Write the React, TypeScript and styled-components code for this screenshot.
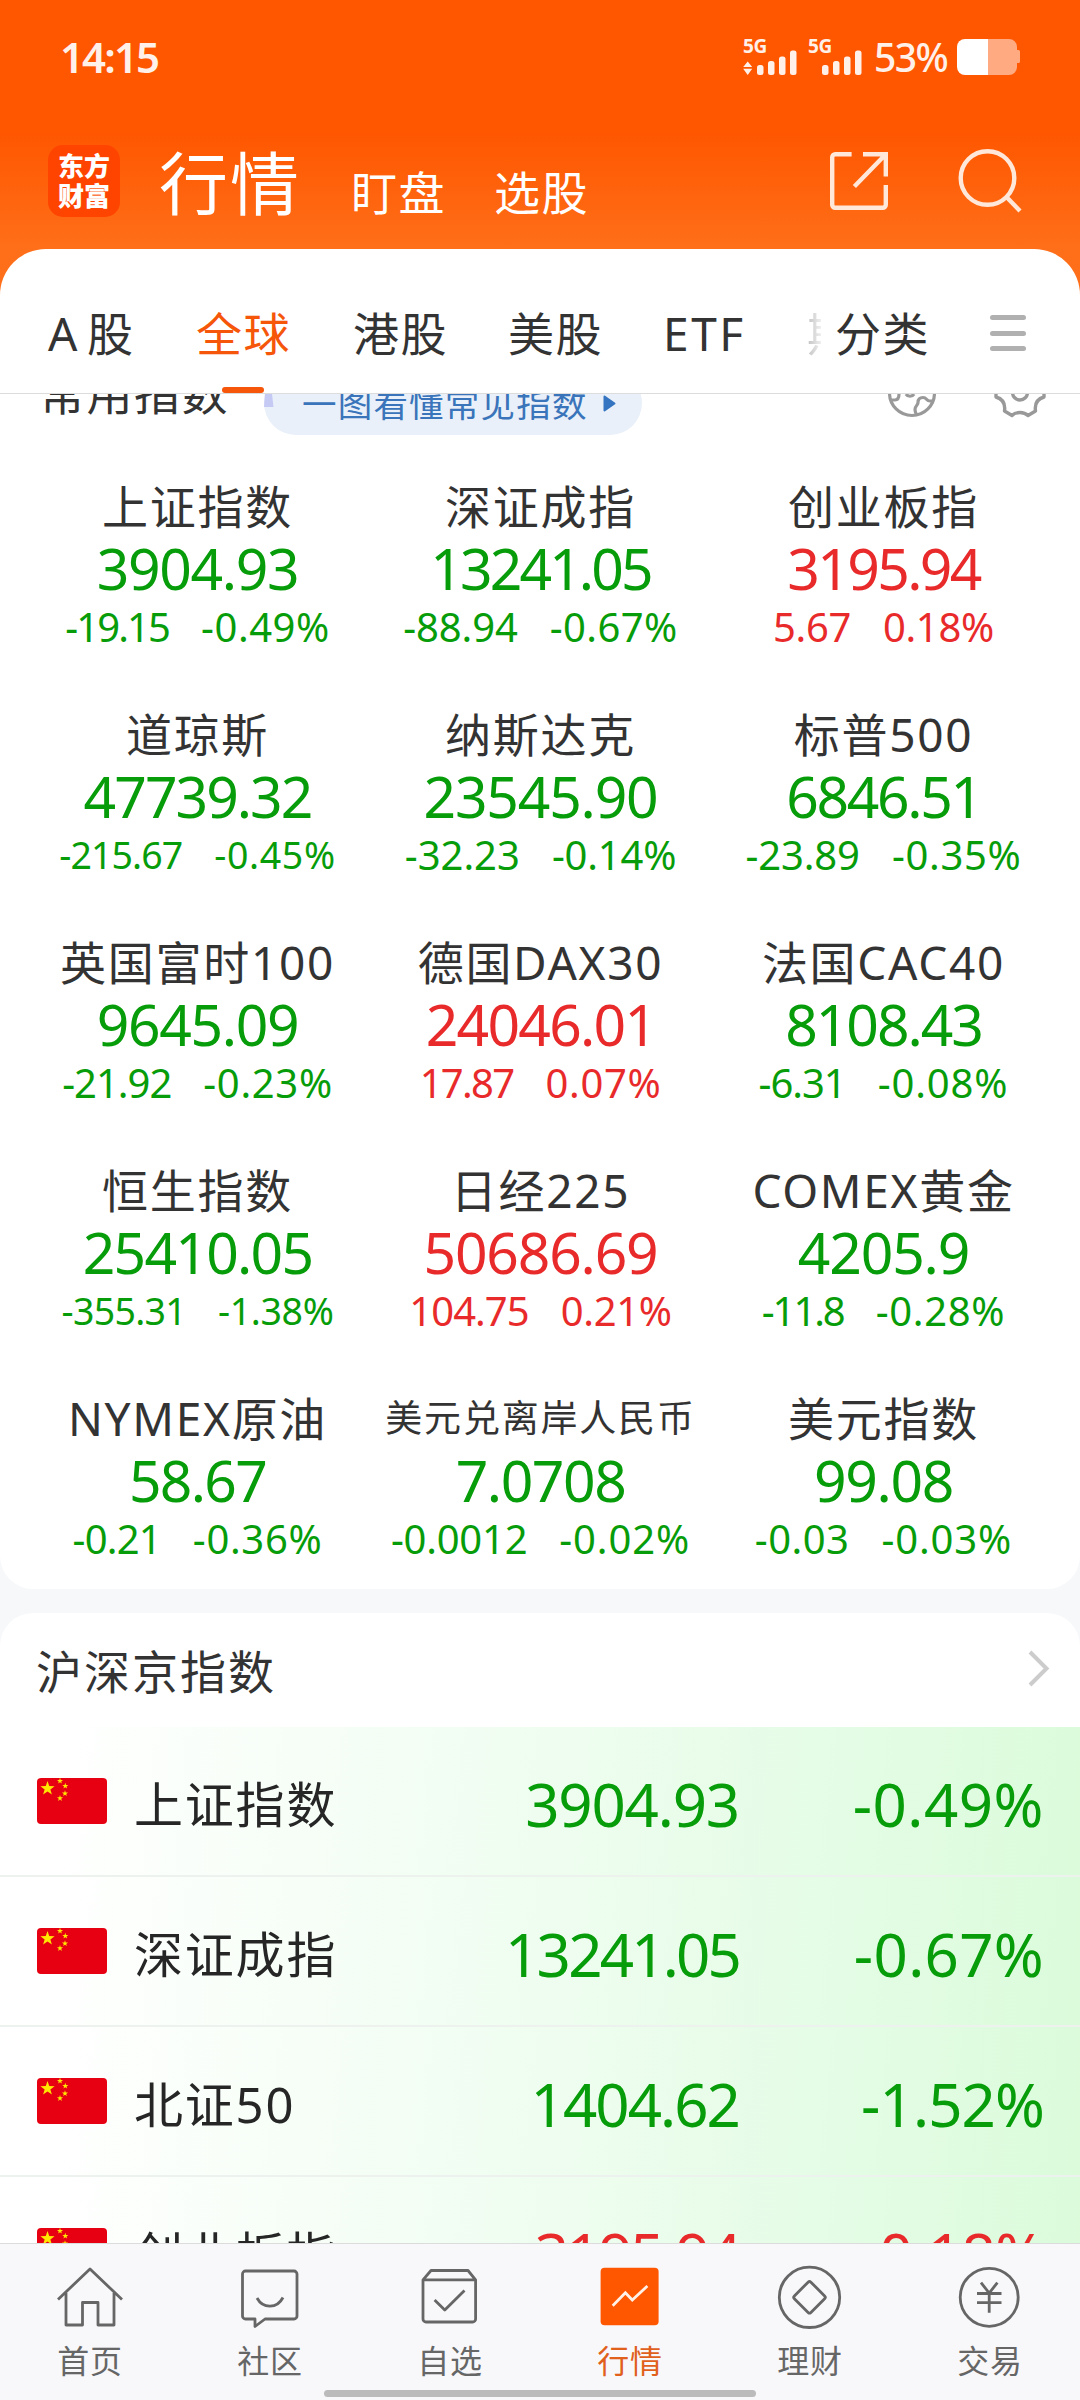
import React from 'react';
import styled, { createGlobalStyle, css } from 'styled-components';

const GREEN = '#079c09';
const RED = '#e92a2b';
const INK = '#333333';

const GlobalStyle = createGlobalStyle`
  * { box-sizing: border-box; }
  html, body { margin: 0; padding: 0; }
  body {
    width: 1080px;
    height: 2400px;
    overflow: hidden;
    font-family: "Noto Sans", "Noto Sans CJK SC", sans-serif;
    color: ${INK};
  }
`;

const Screen = styled.div`
  width: 1080px;
  height: 2400px;
  display: flex;
  flex-direction: column;
  overflow: hidden;
  background: linear-gradient(180deg, #ff5600 0, #ff5600 130px, #ff6e18 246px, #ff6e18 100%);
`;

/* ---------- status bar ---------- */

const StatusBar = styled.div`
  flex: none;
  height: 114px;
  padding: 0 60px 0 60px;
  display: flex;
  align-items: center;
  justify-content: space-between;
  color: #fff1ea;
`;

const Clock = styled.div`
  font-size: 42px;
  font-weight: 600;
  line-height: 60px;
  letter-spacing: -1.9px;
`;

const StatusRight = styled.div`
  display: flex;
  align-items: center;
`;

const Signal = styled.div<{ $gap: number }>`
  width: 54px;
  height: 36px;
  margin-right: ${(p) => p.$gap}px;
  display: grid;
  > * { grid-area: 1 / 1; }
`;

const SignalLabel = styled.span`
  font-size: 19px;
  line-height: 14px;
  font-weight: 700;
  letter-spacing: -0.3px;
`;

const Percent = styled.span`
  width: 83px;
  font-size: 39px;
  font-weight: 500;
  line-height: 36px;
  letter-spacing: -1.6px;
`;

/* ---------- app header ---------- */

const Header = styled.header`
  flex: none;
  height: 135px;
  padding: 31px 58px 0 48px;
  display: flex;
  align-items: flex-start;
`;

const Logo = styled.div`
  width: 72px;
  height: 72px;
  border-radius: 15px;
  background: #ff4400;
  color: #fff;
  padding-top: 5px;
  font-family: "Noto Sans CJK SC", sans-serif;
  font-size: 26px;
  line-height: 30px;
  font-weight: 900;
  text-align: center;
`;

const Modes = styled.nav`
  flex: 1;
  height: 72px;
  margin-left: 39px;
  display: flex;
  align-items: baseline;
  color: #fff;
  font-family: "Noto Sans CJK SC", sans-serif;
`;

const Mode = styled.span<{ $active?: boolean }>`
  font-size: ${(p) => (p.$active ? 69 : 46)}px;
  line-height: 71px;
  letter-spacing: ${(p) => (p.$active ? 2 : 1.5)}px;
  margin-right: ${(p) => (p.$active ? 50 : 48)}px;
  font-weight: 400;
`;

const HeaderIcons = styled.div`
  display: flex;
  gap: 70px;
  padding-top: 4px;
`;

/* ---------- market tabs ---------- */

const Sheet = styled.main`
  flex: 1;
  min-height: 0;
  display: flex;
  flex-direction: column;
  border-radius: 46px 46px 0 0;
  overflow: hidden;
  background: #fff;
`;

const TabBar = styled.div`
  flex: none;
  height: 145px;
  border-bottom: 1px solid #dcdcdc;
  padding: 0 54px 0 48px;
  display: flex;
  align-items: stretch;
  font-size: 46px;
`;

const Tab = styled.div<{ $width: number; $active?: boolean; $track?: number }>`
  flex: none;
  width: ${(p) => p.$width}px;
  line-height: 169px;
  letter-spacing: ${(p) => p.$track ?? 1.6}px;
  white-space: nowrap;
  color: ${(p) => (p.$active ? '#f5560a' : INK)};
  position: relative;
  ${(p) =>
    p.$active &&
    css`
      &::after {
        content: '';
        position: absolute;
        left: 26px;
        bottom: 0;
        width: 42px;
        height: 6px;
        border-radius: 3px;
        background: #f5560a;
      }
    `}
`;

const FadedTab = styled(Tab)`
  width: 14px;
  margin-right: 14px;
  overflow: hidden;
  -webkit-mask-image: linear-gradient(90deg, rgba(0, 0, 0, 0.3), rgba(0, 0, 0, 0.08));
  mask-image: linear-gradient(90deg, rgba(0, 0, 0, 0.3), rgba(0, 0, 0, 0.08));
`;

const MenuLines = styled.div`
  width: 36px;
  height: 36px;
  margin: 66px 0 0 auto;
  display: flex;
  flex-direction: column;
  justify-content: space-between;
`;

const MenuLine = styled.i`
  height: 5px;
  border-radius: 3px;
  background: #b0b0b0;
`;

/* ---------- scroll area ---------- */

const Scroll = styled.div`
  flex: 1;
  min-height: 0;
  overflow: hidden;
  background: #f7f8fa;
`;

const Panel = styled.section<{ $first?: boolean }>`
  background: #fff;
  overflow: hidden;
  ${(p) =>
    p.$first
      ? css`
          height: 1235px;
          margin: -40px 0 24px;
          border-radius: 0 0 33px 33px;
        `
      : css`
          border-radius: 33px 33px 0 0;
        `}
`;

const CommonHead = styled.div`
  height: 117px;
  padding: 0 34px 0 39px;
  display: flex;
  align-items: flex-start;
`;

const CommonTitle = styled.h2`
  margin: 0;
  width: 225px;
  font-size: 46px;
  font-weight: 400;
  line-height: 76px;
  letter-spacing: 1.5px;
  white-space: nowrap;
`;

const GuidePill = styled.div`
  width: 378px;
  height: 64px;
  margin-top: 17px;
  border-radius: 32px;
  background: #e9f0f9;
  color: #3a74ba;
  display: flex;
  align-items: center;
  font-size: 34.5px;
  letter-spacing: 1.2px;
  white-space: nowrap;
`;

const GuideText = styled.span`
  margin: -2px 15px 0 28px;
`;

const HeadIcons = styled.div`
  margin: 14px 0 0 auto;
  display: flex;
  gap: 57px;
`;

const Grid = styled.div`
  display: grid;
  grid-template-columns: repeat(3, 343px);
  grid-auto-rows: 228px;
  justify-content: center;
`;

const Cell = styled.div<{ $color: string }>`
  display: flex;
  flex-direction: column;
  align-items: center;
  color: ${(p) => p.$color};
  white-space: nowrap;
  padding: 5px 0 0 1px;
`;

const CellName = styled.div<{ $small?: boolean }>`
  color: ${INK};
  font-size: ${(p) => (p.$small ? 37 : 46)}px;
  letter-spacing: ${(p) => (p.$small ? 1.8 : 1.7)}px;
  line-height: 60px;
`;

const CellPrice = styled.div<{ $track: number }>`
  font-size: 57px;
  line-height: 64px;
  letter-spacing: ${(p) => p.$track}em;
`;

const CellDelta = styled.div<{ $long: boolean }>`
  display: flex;
  gap: 32px;
  font-size: ${(p) => (p.$long ? 37.5 : 40)}px;
  line-height: 54px;
`;

const Delta = styled.span<{ $track: number }>`
  letter-spacing: ${(p) => p.$track}em;
`;

/* ---------- index list ---------- */

const ListHead = styled.div`
  height: 114px;
  padding: 0 30px 3px 36px;
  display: flex;
  align-items: center;
  justify-content: space-between;
  font-size: 46px;
  letter-spacing: 2px;
`;

const Row = styled.div`
  height: 150px;
  padding: 3px 36px 0 37px;
  border-bottom: 2px solid #eef2ee;
  background: linear-gradient(96deg, #ffffff 4%, #effdf0 50%, #e3fce4 80%, #dbfbdb 100%);
  display: grid;
  grid-template-columns: 97px 280px 325px 1fr;
  align-items: center;
  white-space: nowrap;
`;

const RowName = styled.div`
  color: #262626;
  font-size: 49px;
  letter-spacing: 1.8px;
  padding-bottom: 3px;
`;

const RowNumber = styled.div<{ $color: string; $track: number }>`
  color: ${(p) => p.$color};
  font-size: 60px;
  line-height: 80px;
  padding-top: 2px;
  text-align: right;
  letter-spacing: ${(p) => p.$track}em;
`;

/* ---------- bottom navigation ---------- */

const BottomNav = styled.nav`
  flex: none;
  height: 157px;
  border-top: 1px solid #dcdcdc;
  background: #f8f8fb;
  display: flex;
  flex-direction: column;
  align-items: center;
`;

const NavItems = styled.div`
  width: 1080px;
  height: 146px;
  display: grid;
  grid-template-columns: repeat(6, 180px);
`;

const NavItem = styled.div<{ $active?: boolean }>`
  display: flex;
  flex-direction: column;
  align-items: center;
  padding-top: 22px;
  color: ${(p) => (p.$active ? '#e0601c' : '#666666')};
  font-size: 32px;
  line-height: 61px;
  letter-spacing: 0.8px;
`;

const HomeIndicator = styled.div`
  width: 432px;
  height: 7px;
  border-radius: 4px;
  background: #bbbbbb;
`;

/* ---------- drawings ---------- */

const SignalBars = ({ arrows }: { arrows?: boolean }) => (
  <svg width="54" height="36" viewBox="0 0 54 36" fill="#fff1ea">
    {arrows && <path d="M4.7 22.5 9.2 28H.2ZM.2 29.8h9L4.7 36Z" />}
    <rect x="14" y="26" width="6.5" height="10" rx="2.5" />
    <rect x="25" y="22" width="6.5" height="14" rx="2.5" />
    <rect x="36" y="17.5" width="6.5" height="18.5" rx="2.5" />
    <rect x="47" y="11.5" width="6.5" height="24.5" rx="2.5" />
  </svg>
);

const Battery = () => (
  <svg width="63" height="36" viewBox="0 0 63 36">
    <path d="M31 0H52a8 8 0 0 1 8 8v3h1.5a1.5 1.5 0 0 1 1.5 1.5v10a1.5 1.5 0 0 1-1.5 1.5H60v4a8 8 0 0 1-8 8H31Z" fill="#ffaa80" />
    <path d="M8 0H31V36H8a8 8 0 0 1-8-8V8a8 8 0 0 1 8-8Z" fill="#fff" />
  </svg>
);

const ShareIcon = () => (
  <svg width="58" height="62" viewBox="0 -3 58 62" fill="none" stroke="#ffe8d9" strokeWidth="4.4">
    <path d="M21.6 2.2H5.2a3 3 0 0 0-3 3V52.8a3 3 0 0 0 3 3H52.8a3 3 0 0 0 3-3V33" />
    <path d="M33 2.2H55.8V24.5M55 3 24.4 34.5" />
  </svg>
);

const SearchIcon = () => (
  <svg width="64" height="64" viewBox="0 0 64 64" fill="none" stroke="#ffe8d9" strokeWidth="4.4">
    <circle cx="29.500" cy="29" r="26.800" />
    <path d="M48 47.500 62 62" />
  </svg>
);

const GlobeIcon = () => (
  <svg width="50" height="50" viewBox="0 0 50 50" fill="none" stroke="#999" strokeWidth="3.2">
    <circle cx="25" cy="25" r="22.5" />
    <path d="M3 32h5c3 0 4-2 4-6V20M19 26c2 3 6 3 8 0M47 33h-4c-4 0-3-3.500-7-3.500-4 0-5 2-5 5 0 3-3 3-3 7 0 3 1 4 2 6" />
  </svg>
);

const GearIcon = () => (
  <svg width="52" height="50" viewBox="0 0 52 50" fill="none" stroke="#999" strokeWidth="3.4" strokeLinejoin="round">
    <path d="M18 2c4 4 12 4 16 0l7.500 4.500C40 14 43 19 50 20v9c-7 2-9.500 7-8.500 14L34 47.500c-4-4-12-4-16 0L10.500 43C11.500 36 9 31 2 29V20c7-1 10-6 8.500-13.500Z" />
    <circle cx="26" cy="24.500" r="7.500" />
  </svg>
);

const PillPicture = () => (
  <svg width="10" height="64" viewBox="0 0 10 64">
    <path d="M1.5 14H7L9.5 36H0Z" fill="#c5caf5" />
  </svg>
);

const PlayIcon = () => (
  <svg width="13" height="17" viewBox="0 0 13 17">
    <path d="M1.5 1.5 11.5 8.5 1.5 15.5Z" fill="#3474c0" stroke="#3474c0" strokeWidth="2" strokeLinejoin="round" />
  </svg>
);

const Chevron = () => (
  <svg width="22" height="37" viewBox="0 0 22 37" fill="none" stroke="#cccccc" strokeWidth="4">
    <path d="M2 2 18.5 18.5 2 35" />
  </svg>
);

const star = (cx: number, cy: number, r: number) =>
  Array.from({ length: 10 }, (_, i) => {
    const a = (Math.PI / 5) * i - Math.PI / 2;
    const d = i % 2 ? r * 0.4 : r;
    return `${(cx + d * Math.cos(a)).toFixed(2)},${(cy + d * Math.sin(a)).toFixed(2)}`;
  }).join(' ');

const Flag = () => (
  <svg width="70" height="50" viewBox="0 0 70 50">
    <rect width="70" height="46" rx="4" fill="#e60012" />
    <g fill="#ffe600">
      <polygon points={star(10.5, 10.5, 7.5)} />
      <polygon points={star(23, 3, 3.2)} />
      <polygon points={star(28.3, 8, 3.2)} />
      <polygon points={star(28, 15.5, 3.2)} />
      <polygon points={star(23, 20.3, 3.2)} />
    </g>
  </svg>
);

const NavSvg = ({ children }: { children: React.ReactNode }) => (
  <svg width="64" height="64" viewBox="0 0 64 64" fill="none" stroke="#666" strokeWidth="2.8" overflow="visible">
    {children}
  </svg>
);

const navItems = [
  {
    label: '首页',
    icon: <path d="M0 33.5 32 3 64 33.5M8 27V59H24.5V36.5H40V59H56V27" strokeLinejoin="round" />,
  },
  {
    label: '社区',
    icon: (
      <path
        d="M7.5 5H56a3 3 0 0 1 3 3V50a3 3 0 0 1-3 3H27l-10 7.5V53H7.5a3 3 0 0 1-3-3V8a3 3 0 0 1 3-3ZM19 32c6 11 20 11 26-0.5"
        strokeLinejoin="round"
      />
    ),
  },
  {
    label: '自选',
    icon: (
      <path
        d="M5 13.8 13 4.5H50L57.6 13.8V53a3 3 0 0 1-3 3H8a3 3 0 0 1-3-3ZM5 13.8H57.6M16.6 34 26.8 44 46.5 24.5"
        strokeLinejoin="round"
      />
    ),
  },
  {
    label: '行情',
    active: true,
    icon: (
      <>
        <rect x="2.6" y="1.7" width="58" height="57.6" rx="4" fill="#ff5600" stroke="none" />
        <path d="M14.7 39.7 27.4 26.8 34.3 34 49.4 20" stroke="#fff1e8" />
      </>
    ),
  },
  {
    label: '理财',
    icon: (
      <>
        <circle cx="31.5" cy="31.3" r="30.2" />
        <rect x="19.8" y="19.6" width="23.4" height="23.4" rx="2" transform="rotate(45 31.5 31.3)" />
      </>
    ),
  },
  {
    label: '交易',
    icon: (
      <>
        <circle cx="31.2" cy="31.3" r="29" />
        <path d="M23 16.7 31.2 27 39.4 16.7M31.2 27V46.8M19 27.5H43.5M19 36.7H43.5" />
      </>
    ),
  },
];

/* ---------- data ---------- */

type Quote = { name: string; price: string; change: string; rate: string; up?: boolean; small?: boolean };

const quotes: Quote[] = [
  { name: '上证指数', price: '3904.93', change: '-19.15', rate: '-0.49%' },
  { name: '深证成指', price: '13241.05', change: '-88.94', rate: '-0.67%' },
  { name: '创业板指', price: '3195.94', change: '5.67', rate: '0.18%', up: true },
  { name: '道琼斯', price: '47739.32', change: '-215.67', rate: '-0.45%' },
  { name: '纳斯达克', price: '23545.90', change: '-32.23', rate: '-0.14%' },
  { name: '标普500', price: '6846.51', change: '-23.89', rate: '-0.35%' },
  { name: '英国富时100', price: '9645.09', change: '-21.92', rate: '-0.23%' },
  { name: '德国DAX30', price: '24046.01', change: '17.87', rate: '0.07%', up: true },
  { name: '法国CAC40', price: '8108.43', change: '-6.31', rate: '-0.08%' },
  { name: '恒生指数', price: '25410.05', change: '-355.31', rate: '-1.38%' },
  { name: '日经225', price: '50686.69', change: '104.75', rate: '0.21%', up: true },
  { name: 'COMEX黄金', price: '4205.9', change: '-11.8', rate: '-0.28%' },
  { name: 'NYMEX原油', price: '58.67', change: '-0.21', rate: '-0.36%' },
  { name: '美元兑离岸人民币', price: '7.0708', change: '-0.0012', rate: '-0.02%', small: true },
  { name: '美元指数', price: '99.08', change: '-0.03', rate: '-0.03%' },
];

const rows: Quote[] = [
  { name: '上证指数', price: '3904.93', change: '', rate: '-0.49%' },
  { name: '深证成指', price: '13241.05', change: '', rate: '-0.67%' },
  { name: '北证50', price: '1404.62', change: '', rate: '-1.52%' },
  { name: '创业板指', price: '3195.94', change: '', rate: '0.18%', up: true },
];

/* Narrow figures pull the whole number tighter, wide zeros loosen it. */
const tracking = (text: string, base: number) => {
  const count = (digit: string) => text.split(digit).length - 1;
  return base - (count('1') * 0.13 + count('7') * 0.04 + count('9') * 0.02 - count('0') * 0.03) / text.length;
};

export default function App() {
  return (
    <Screen>
      <GlobalStyle />
      <StatusBar>
        <Clock>14:15</Clock>
        <StatusRight>
          <Signal $gap={11}>
            <SignalLabel>5G</SignalLabel>
            <SignalBars arrows />
          </Signal>
          <Signal $gap={12}>
            <SignalLabel>5G</SignalLabel>
            <SignalBars />
          </Signal>
          <Percent>53%</Percent>
          <Battery />
        </StatusRight>
      </StatusBar>

      <Header>
        <Logo>
          东方
          <br />
          财富
        </Logo>
        <Modes>
          <Mode $active>行情</Mode>
          <Mode>盯盘</Mode>
          <Mode>选股</Mode>
        </Modes>
        <HeaderIcons>
          <ShareIcon />
          <SearchIcon />
        </HeaderIcons>
      </Header>

      <Sheet>
        <TabBar>
          <Tab $width={148} $track={9.5}>A股</Tab>
          <Tab $width={157} $active>全球</Tab>
          <Tab $width={155}>港股</Tab>
          <Tab $width={155}>美股</Tab>
          <Tab $width={144} $track={2.6}>ETF</Tab>
          <FadedTab $width={14}>期货</FadedTab>
          <Tab $width={100}>分类</Tab>
          <MenuLines>
            <MenuLine />
            <MenuLine />
            <MenuLine />
          </MenuLines>
        </TabBar>

        <Scroll>
          <Panel $first>
            <CommonHead>
              <CommonTitle>常用指数</CommonTitle>
              <GuidePill>
                <PillPicture />
                <GuideText>一图看懂常见指数</GuideText>
                <PlayIcon />
              </GuidePill>
              <HeadIcons>
                <GlobeIcon />
                <GearIcon />
              </HeadIcons>
            </CommonHead>
            <Grid>
              {quotes.map((q) => (
                <Cell key={q.name} $color={q.up ? RED : GREEN}>
                  <CellName $small={q.small}>{q.name}</CellName>
                  <CellPrice $track={tracking(q.price, -0.022)}>{q.price}</CellPrice>
                  <CellDelta $long={/^-\d{3}\./.test(q.change)}>
                    <Delta $track={tracking(q.change, 0)}>{q.change}</Delta>
                    <Delta $track={tracking(q.rate, 0.012)}>{q.rate}</Delta>
                  </CellDelta>
                </Cell>
              ))}
            </Grid>
          </Panel>

          <Panel>
            <ListHead>
              沪深京指数
              <Chevron />
            </ListHead>
            {rows.map((r) => (
              <Row key={r.name}>
                <Flag />
                <RowName>{r.name}</RowName>
                <RowNumber $color={r.up ? RED : GREEN} $track={tracking(r.price, -0.018)}>
                  {r.price}
                </RowNumber>
                <RowNumber $color={r.up ? RED : GREEN} $track={tracking(r.rate, 0.007)}>
                  {r.rate}
                </RowNumber>
              </Row>
            ))}
          </Panel>
        </Scroll>
      </Sheet>

      <BottomNav>
        <NavItems>
          {navItems.map((n) => (
            <NavItem key={n.label} $active={n.active}>
              <NavSvg>{n.icon}</NavSvg>
              {n.label}
            </NavItem>
          ))}
        </NavItems>
        <HomeIndicator />
      </BottomNav>
    </Screen>
  );
}
